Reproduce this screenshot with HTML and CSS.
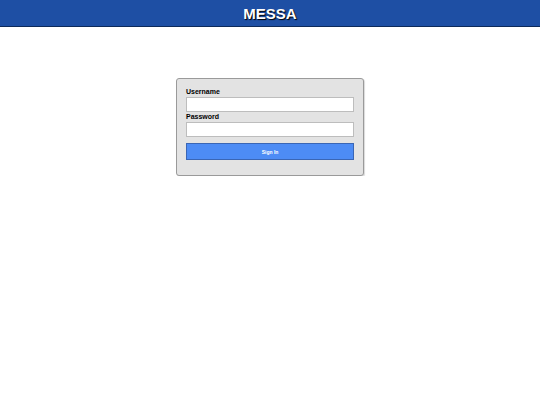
FILE: index.html
```html
<!DOCTYPE html>
<html>
<head>
<meta charset="utf-8">
<link rel="stylesheet" href="styles.css">
</head>
<body>
<header class="topbar"><h1 class="brand">MESSA</h1></header>
<main class="main">
  <form class="login">
    <label class="lbl">Username</label>
    <input class="field" type="text">
    <label class="lbl">Password</label>
    <input class="field" type="password">
    <button class="btn" type="button">Sign In</button>
  </form>
</main>
</body>
</html>
```
FILE: styles.css
```css
html, body { margin: 0; padding: 0; background: #fff; font-family: "Liberation Sans", Arial, sans-serif; }
.topbar {
  height: 26px;
  background: #1e4fa4;
  border-bottom: 1px solid #0d2a5a;
  display: flex; align-items: center; justify-content: center;
}
.brand {
  margin: 0;
  color: #fff;
  font-size: 15px;
  font-weight: bold;
  text-shadow: 1px 1px 1px #000;
}
.main { display: flex; justify-content: center; padding-top: 51px; }
.login {
  width: 168px;
  padding: 8px 9px 15px 9px;
  background: #e3e3e3;
  border: 1px solid #9a9a9a;
  border-radius: 3px;
  box-shadow: 1px 1px 1px rgba(0,0,0,0.15);
  display: flex; flex-direction: column;
}
.lbl { font-size: 7px; font-weight: bold; color: #000; line-height: 9px; margin-bottom: 1px; }
.field {
  box-sizing: border-box;
  height: 15px; width: 100%;
  margin: 0; padding: 0;
  border: 1px solid #bdbdbd;
  background: #fff;
}
.btn {
  margin-top: 6px;
  height: 17px; width: 100%;
  background: #4d8cf5;
  border: 1px solid #3a66b5;
  color: #fff;
  font-family: "Liberation Sans", Arial, sans-serif;
  font-size: 5px;
  font-weight: bold;
  padding: 0;
}
```
